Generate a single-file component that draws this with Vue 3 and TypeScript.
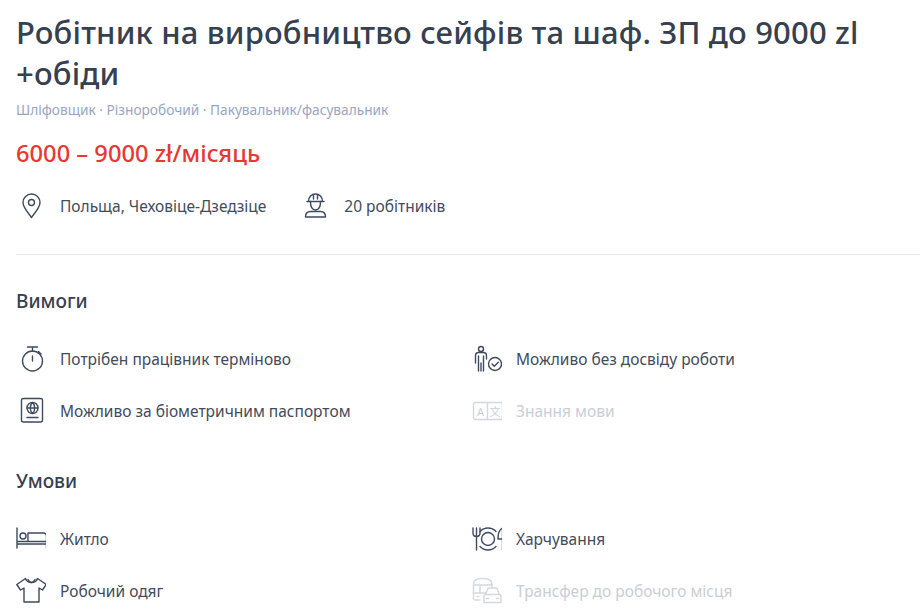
<template>
  <main class="vacancy">
    <h1 class="title">Робітник на виробництво сейфів та шаф. ЗП до 9000 zl +обіди</h1>
    <p class="tags">Шліфовщик · Різноробочий · Пакувальник/фасувальник</p>
    <p class="salary">6000 – 9000 zł/місяць</p>

    <div class="meta">
      <div class="item">
        <svg class="icon" viewBox="0 0 30 30">
          <path d="M15.500 26.500C12 21.500 7 16.500 7 11.500a8.500 8.500 0 0 1 17 0c0 5-5 10-8.500 15z" />
          <circle cx="15.500" cy="11.500" r="3" />
        </svg>
        <span>Польща, Чеховіце-Дзедзіце</span>
      </div>
      <div class="item">
        <svg class="icon" viewBox="0 0 30 30">
          <path d="M7 10.500h17M8.500 10.500c0-4.500 3-7.500 7-7.500s7 3 7 7.500M13.500 3.500v4.500M17.500 3.500v4.500" />
          <path d="M10.500 10.500c0 5 1.500 8.500 5 8.500s5-3.500 5-8.500" />
          <path d="M5.500 26c0-4 2-5.500 5-5.500h10c3 0 5 1.500 5 5.500z" />
        </svg>
        <span>20 робітників</span>
      </div>
    </div>

    <hr class="divider" />

    <h2 class="heading">Вимоги</h2>
    <div class="grid">
      <div class="item">
        <svg class="icon" viewBox="0 0 30 30">
          <circle cx="16.500" cy="17" r="10" />
          <path d="M11.500 3h10M16.500 3v4M22.500 7.500l2.500 2.500M16.500 12v5" />
        </svg>
        <span>Потрібен працівник терміново</span>
      </div>
      <div class="item">
        <svg class="icon" viewBox="0 0 30 30">
          <circle cx="9" cy="5" r="2.500" />
          <path d="M3.500 19v-7c0-2 1-3.500 3-3.500h5c2 0 3 1.500 3 3.500v3M6.500 12v15M11.500 12v15M9 19v8" />
          <circle cx="23" cy="20" r="6.500" />
          <path d="M20 20l2.300 2.300 4-4" />
        </svg>
        <span>Можливо без досвіду роботи</span>
      </div>
      <div class="item">
        <svg class="icon" viewBox="0 0 30 30">
          <rect x="5.500" y="2.500" width="21" height="23.500" rx="2" />
          <circle cx="16.500" cy="12" r="5.500" />
          <path d="M11 12h11M16.500 6.500c-3 3-3 8 0 11M16.500 6.500c3 3 3 8 0 11M11 21.500h11" />
        </svg>
        <span>Можливо за біометричним паспортом</span>
      </div>
      <div class="item off">
        <svg class="icon" viewBox="0 0 30 30">
          <rect x="1.500" y="6.500" width="29" height="17" rx="2" />
          <path d="M15.500 6.500v17" />
          <text x="8.500" y="19.500" class="glyph" text-anchor="middle">A</text>
          <text x="23" y="19.500" class="glyph" text-anchor="middle">文</text>
        </svg>
        <span>Знання мови</span>
      </div>
    </div>

    <h2 class="heading second">Умови</h2>
    <div class="grid">
      <div class="item">
        <svg class="icon" viewBox="0 0 30 30">
          <path d="M1 4v20M1 20h29.500M1 17.500h29.500M30.500 24V12c0-2-1-3-3-3H12v8.500" />
          <circle cx="7" cy="12" r="3" />
        </svg>
        <span>Житло</span>
      </div>
      <div class="item">
        <svg class="icon" viewBox="0 0 30 30">
          <path d="M1 4v5c0 2 1.500 3.500 3.500 3.500S8 11 8 9V4M4.500 4v22" />
          <path d="M8 7.500a11 11 0 0 1 16 0M8 22.500a11 11 0 0 0 16 0" />
          <circle cx="16" cy="15" r="6.500" />
          <path d="M30.500 26V4c-3 1.500-4.500 5-4.500 11h4.500" />
        </svg>
        <span>Харчування</span>
      </div>
      <div class="item">
        <svg class="icon" viewBox="0 0 30 30">
          <path d="M9.500 2.500L.8 8.500l3.700 5.500L8 12v14h15V12l3.500 2 3.700-5.500-8.700-6c-1 3-3.500 4-6 4s-5-1-6-4z" />
          <path d="M12 3.500c1 2 2 3 3.500 3s2.500-1 3.500-3" />
        </svg>
        <span>Робочий одяг</span>
      </div>
      <div class="item off">
        <svg class="icon" viewBox="0 0 30 30">
          <path d="M8 24H3.500C2 24 1.500 23 1.500 22V8c0-4 4-5.500 9-5.500S20 4 20 8v3.500" />
          <path d="M1.500 9h18.500M1.500 17h12M8 9v8M5 20.500h2" />
          <path d="M12 26.500v-6c0-1 .500-2 1.500-2l2-5c.300-1 1-1.500 2-1.500h6c1 0 1.700.500 2 1.500l2 5c1 0 1.500 1 1.500 2v6zM13.500 18.500h14M14.500 22.500h2M24.500 22.500h2" />
        </svg>
        <span>Трансфер до робочого місця</span>
      </div>
    </div>
  </main>
</template>

<script setup lang="ts">
</script>

<style>
html,
body {
  overflow: hidden;
  background: #fff;
}
</style>

<style scoped>
.vacancy {
  padding: 12px 0 0 16px;
  font-family: "Noto Sans", sans-serif;
  color: #434b5c;
}

.title {
  margin: 0;
  padding-right: 50px;
  font-size: 31px;
  line-height: 41px;
  letter-spacing: 0.17px;
  font-weight: 500;
  color: #36404f;
}

.tags {
  margin: 6px 0 0;
  font-size: 13.7px;
  line-height: 20px;
  color: #9aa6bf;
}

.salary {
  margin: 18px 0 0;
  font-size: 23.7px;
  line-height: 30px;
  font-weight: 500;
  color: #e53935;
}

.meta {
  display: flex;
  gap: 34px;
  margin-top: 23px;
}

.divider {
  margin: 33px 0 0;
  border: 0;
  border-top: 1px solid #e3e6eb;
}

.heading {
  margin: 33px 0 0;
  font-size: 19px;
  line-height: 26px;
  font-weight: 500;
  color: #36404f;
}

.heading.second {
  margin-top: 42px;
}

.grid {
  display: grid;
  grid-template-columns: 456px 1fr;
  row-gap: 22px;
  margin-top: 30px;
}

.item {
  display: flex;
  align-items: center;
  gap: 14px;
  font-size: 15.5px;
  line-height: 30px;
}

.icon {
  flex: none;
  width: 30px;
  height: 30px;
  fill: none;
  stroke: #3e4a5e;
  stroke-width: 1.4;
  stroke-linecap: round;
  stroke-linejoin: round;
}

.glyph {
  fill: #c9ced8;
  stroke: none;
  font-size: 11px;
  font-family: "Noto Sans", "Noto Sans CJK SC", sans-serif;
}

.off {
  color: #c9ced6;
}

.off .icon {
  stroke: #d3d7df;
}
</style>
